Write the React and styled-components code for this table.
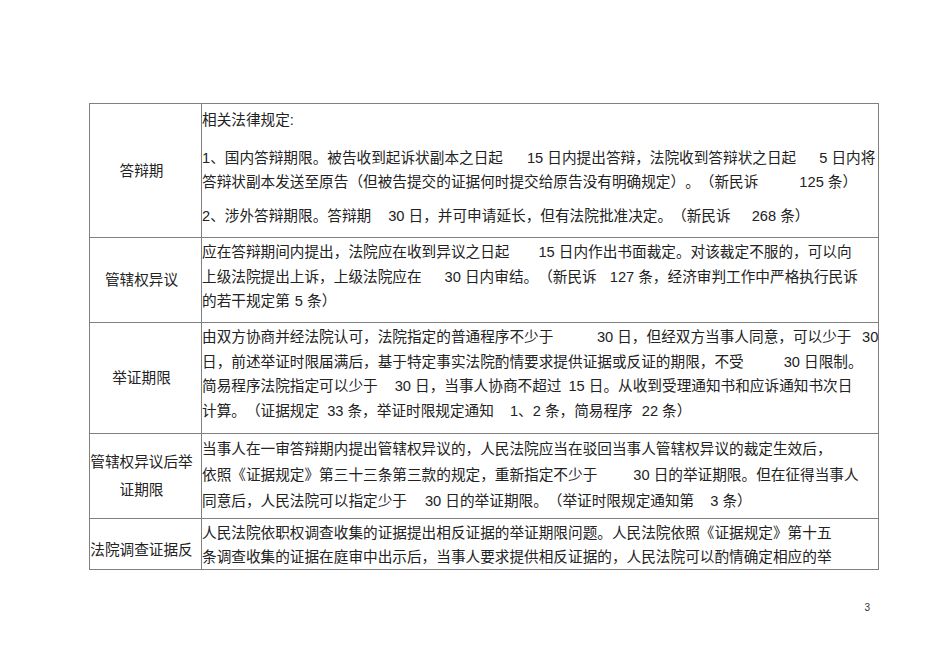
import React from 'react';
import styled, { createGlobalStyle } from 'styled-components';

const GlobalStyle = createGlobalStyle`
  html,
  body {
    margin: 0;
    background: #fff;
  }
  body {
    font-family: 'Liberation Sans', 'Noto Sans CJK SC', sans-serif;
    color: #222;
  }
`;

const Page = styled.div`
  width: 950px;
  min-height: 672px;
  box-sizing: border-box;
  padding: 103px 0 0 89px;
`;

const Table = styled.div`
  width: 790px;
  box-sizing: border-box;
  border: 1px solid #808080;
`;

const Row = styled.div`
  display: grid;
  grid-template-columns: 112px 1fr;
  height: ${props => props.h}px;
  & + & {
    border-top: 1px solid #808080;
  }
`;

const Label = styled.div`
  border-right: 1px solid #808080;
  display: flex;
  flex-direction: column;
  justify-content: center;
  align-items: center;
  padding: ${props => props.shift || 0}px 8px 0 0;
  font-size: 14.65px;
  line-height: 28px;
  text-align: center;
  white-space: nowrap;
`;

const Body = styled.div`
  padding-top: ${props => props.pt || 2}px;
  font-size: 14.65px;
  line-height: ${props => props.lh || 24.5}px;
  text-spacing-trim: space-all;
`;

const Line = styled.div`
  white-space: nowrap;
  margin-top: ${props => props.space || 0}px;
`;

// the wide blanks the source document leaves before numbers
const Gap = styled.span`
  display: inline-block;
  width: ${props => props.w}px;
`;

const Footer = styled.div`
  width: 790px;
  margin-top: 32px;
  padding-right: 9px;
  box-sizing: border-box;
  text-align: right;
  font-size: 10px;
  line-height: 12px;
  color: #333;
`;

const App = () => (
  <>
    <GlobalStyle />
    <Page>
      <Table>
        <Row h={133}>
          <Label>答辩期</Label>
          <Body pt={4} lh={24}>
            <Line>相关法律规定:</Line>
            <Line space={14}>
              1、国内答辩期限。被告收到起诉状副本之日起<Gap w={24} />15 日内提出答辩，法院收到答辩状之日起<Gap w={23} />5 日内将
            </Line>
            <Line>
              答辩状副本发送至原告（但被告提交的证据何时提交给原告没有明确规定）。（新民诉<Gap w={41} />125 条）
            </Line>
            <Line space={10}>
              2、涉外答辩期限。答辩期<Gap w={17} />30 日，并可申请延长，但有法院批准决定。（新民诉<Gap w={21} />268 条）
            </Line>
          </Body>
        </Row>
        <Row h={84}>
          <Label>管辖权异议</Label>
          <Body>
            <Line>
              应在答辩期间内提出，法院应在收到异议之日起<Gap w={29} />15 日内作出书面裁定。对该裁定不服的，可以向
            </Line>
            <Line>
              上级法院提出上诉，上级法院应在<Gap w={23} />30 日内审结。（新民诉<Gap w={13} />127 条，经济审判工作中严格执行民诉
            </Line>
            <Line>
              的若干规定第<Gap w={5} />5 条）
            </Line>
          </Body>
        </Row>
        <Row h={110}>
          <Label>举证期限</Label>
          <Body>
            <Line>
              由双方协商并经法院认可，法院指定的普通程序不少于<Gap w={43.5} />30 日，但经双方当事人同意，可以少于<Gap w={10.5} />30
            </Line>
            <Line>
              日，前述举证时限届满后，基于特定事实法院酌情要求提供证据或反证的期限，不受<Gap w={40} />30 日限制。
            </Line>
            <Line>
              简易程序法院指定可以少于<Gap w={17} />30 日，当事人协商不超过<Gap w={7} />15 日。从收到受理通知书和应诉通知书次日
            </Line>
            <Line>
              计算。（证据规定<Gap w={8} />33 条，举证时限规定通知<Gap w={16} />1、2 条，简易程序<Gap w={9} />22 条）
            </Line>
          </Body>
        </Row>
        <Row h={84}>
          <Label>
            <span>管辖权异议后举</span>
            <span>证期限</span>
          </Label>
          <Body lh={26}>
            <Line>
              当事人在一审答辩期内提出管辖权异议的，人民法院应当在驳回当事人管辖权异议的裁定生效后，
            </Line>
            <Line>
              依照《证据规定》第三十三条第三款的规定，重新指定不少于<Gap w={36} />30 日的举证期限。但在征得当事人
            </Line>
            <Line>
              同意后，人民法院可以指定少于<Gap w={18} />30 日的举证期限。（举证时限规定通知第<Gap w={16} />3 条）
            </Line>
          </Body>
        </Row>
        <Row h={50}>
          <Label shift={12}>法院调查证据反</Label>
          <Body lh={24}>
            <Line>
              人民法院依职权调查收集的证据提出相反证据的举证期限问题。人民法院依照《证据规定》第十五
            </Line>
            <Line>
              条调查收集的证据在庭审中出示后，当事人要求提供相反证据的，人民法院可以酌情确定相应的举
            </Line>
          </Body>
        </Row>
      </Table>
      <Footer>3</Footer>
    </Page>
  </>
);

export default App;
